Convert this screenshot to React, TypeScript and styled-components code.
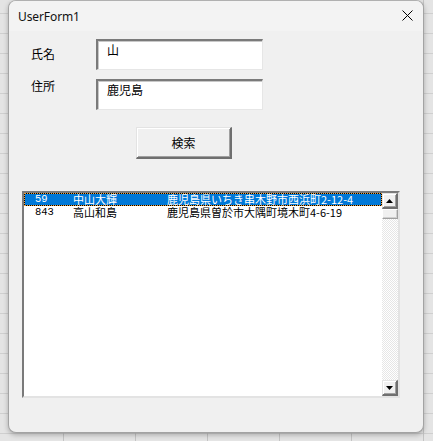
import React from "react";
import styled, { createGlobalStyle } from "styled-components";

const Global = createGlobalStyle`
  html, body {
    margin: 0;
    padding: 0;
    width: 433px;
    height: 441px;
    overflow: hidden;
    background-color: #e4e4e4;
    background-image:
      linear-gradient(to right, #c4c4c4 1px, transparent 1px),
      linear-gradient(to bottom, #cfcfcf 1px, transparent 1px);
    background-size: 72px 20px;
    background-position: 63px 13px;
  }
  * { box-sizing: border-box; }
`;

const ui = `"Noto Sans CJK JP", "Noto Sans", sans-serif`;

const Desktop = styled.div`
  padding-left: 8px;
`;

const Window = styled.div`
  width: 416px;
  height: 433px;
  border: 1px solid #a3a3a3;
  border-top-color: #b0b0b0;
  border-radius: 8px;
  background: #f0f0f0;
  box-shadow: 0 2px 5px rgba(0, 0, 0, 0.25);
  overflow: hidden;
  display: flex;
  flex-direction: column;
`;

const TitleBar = styled.div`
  height: 30px;
  flex: none;
  background: #f3f3f3;
  display: flex;
  align-items: center;
  justify-content: space-between;
  padding: 0 10px 0 9px;
`;

const Title = styled.span`
  font-family: "Segoe UI", "Noto Sans", "Open Sans", sans-serif;
  font-size: 12px;
  color: #111;
  letter-spacing: -0.1px;
  padding-top: 1px;
`;

const CloseButton = styled.div`
  width: 12px;
  height: 12px;
  display: flex;
  align-items: center;
  justify-content: center;
  margin-top: -1px;
`;

const FormBody = styled.div`
  flex: 1;
  padding-top: 8px;
  display: flex;
  flex-direction: column;
  align-items: flex-start;
  font-family: ${ui};
  font-size: 12px;
  color: #000;
`;

const FieldGrid = styled.div`
  display: grid;
  grid-template-columns: 65px 167px;
  row-gap: 9px;
  padding-left: 22px;
`;

const Label = styled.div<{ $top: number }>`
  padding-top: ${(p) => p.$top}px;
  line-height: 14px;
`;

const TextBox = styled.div`
  width: 167px;
  height: 31px;
  background: #fff;
  border-style: solid;
  border-width: 2px 1px 1px 2px;
  border-color: #7a7a7a #e6e6e6 #e6e6e6 #7a7a7a;
  box-shadow: inset 1px 1px 0 #c8c8c8;
  padding: 2px 0 0 9px;
  line-height: 14px;
`;

const Button = styled.div`
  margin: 17px 0 0 127px;
  width: 96px;
  height: 32px;
  background: #f0f0f0;
  border-style: solid;
  border-width: 1px 2px 2px 1px;
  border-color: #e3e3e3 #6f6f6f #6f6f6f #e3e3e3;
  box-shadow: inset 1px 1px 0 #fff, inset -1px -1px 0 #a0a0a0;
  display: flex;
  align-items: center;
  justify-content: center;
  line-height: 14px;
`;

const ListBox = styled.div`
  margin: 32px 0 0 13px;
  width: 378px;
  height: 207px;
  background: #fff;
  border-style: solid;
  border-width: 2px 2px 2px 2px;
  border-color: #7a7a7a #e3e3e3 #e3e3e3 #7a7a7a;
  display: flex;
`;

const Rows = styled.div`
  flex: 1;
  display: flex;
  flex-direction: column;
  font-size: 11px;
`;

const Row = styled.div<{ $selected?: boolean }>`
  height: 13px;
  display: grid;
  grid-template-columns: 38px 94px 1fr;
  align-items: center;
  padding-left: 10px;
  line-height: 11px;
  white-space: nowrap;
  color: ${(p) => (p.$selected ? "#fff" : "#000")};
  border: 1px dotted ${(p) => (p.$selected ? "#f0a23c" : "transparent")};
  background: ${(p) =>
    p.$selected ? "linear-gradient(#0078d7, #0078d7) padding-box, #000" : "transparent"};
`;

const Num = styled.span`
  font-family: "Liberation Mono", "DejaVu Sans Mono", monospace;
  font-size: 10.5px;
`;

const Cell = styled.span``;

const ScrollBar = styled.div`
  width: 16px;
  flex: none;
  display: flex;
  flex-direction: column;
  background-color: #fff;
  background-image: repeating-conic-gradient(#e6e6e6 0 25%, #fff 0 50%);
  background-size: 2px 2px;
`;

const ScrollButton = styled.div`
  height: 16px;
  flex: none;
  background: #f0f0f0;
  border-style: solid;
  border-width: 1px 2px 2px 1px;
  border-color: #e3e3e3 #6f6f6f #6f6f6f #e3e3e3;
  box-shadow: inset 1px 1px 0 #fff, inset -1px -1px 0 #a0a0a0;
  display: flex;
  align-items: center;
  justify-content: center;
`;

const Thumb = styled.div`
  height: 10px;
  flex: none;
  background: #f0f0f0;
  border: 1px solid;
  border-color: #fff #a0a0a0 #a0a0a0 #fff;
  box-shadow: inset -1px -1px 0 #d0d0d0;
`;

const Spacer = styled.div`
  flex: 1;
`;

const Arrow = ({ down }: { down?: boolean }) => (
  <svg width="7" height="4" viewBox="0 0 7 4">
    <polygon points={down ? "0,0 7,0 3.5,4" : "3.5,0 7,4 0,4"} fill="#000" />
  </svg>
);

const rows = [
  { no: "59", name: "中山大輝", addr: "鹿児島県いちき串木野市西浜町2-12-4" },
  { no: "843", name: "高山和島", addr: "鹿児島県曽於市大隅町境木町4-6-19" },
];

export default function App() {
  return (
    <>
      <Global />
      <Desktop>
        <Window>
          <TitleBar>
            <Title>UserForm1</Title>
            <CloseButton>
              <svg width="11" height="11" viewBox="0 0 11 11">
                <path d="M0.5 0.5 L10.5 10.5 M10.5 0.5 L0.5 10.5" stroke="#000" strokeWidth="1" />
              </svg>
            </CloseButton>
          </TitleBar>
          <FormBody>
            <FieldGrid>
              <Label $top={8}>氏名</Label>
              <TextBox>山</TextBox>
              <Label $top={0}>住所</Label>
              <TextBox>鹿児島</TextBox>
            </FieldGrid>
            <Button>検索</Button>
            <ListBox>
              <Rows>
                {rows.map((r, i) => (
                  <Row key={r.no} $selected={i === 0}>
                    <Num>{r.no}</Num>
                    <Cell>{r.name}</Cell>
                    <Cell>{r.addr}</Cell>
                  </Row>
                ))}
              </Rows>
              <ScrollBar>
                <ScrollButton>
                  <Arrow />
                </ScrollButton>
                <Thumb />
                <Spacer />
                <ScrollButton>
                  <Arrow down />
                </ScrollButton>
              </ScrollBar>
            </ListBox>
          </FormBody>
        </Window>
      </Desktop>
    </>
  );
}
